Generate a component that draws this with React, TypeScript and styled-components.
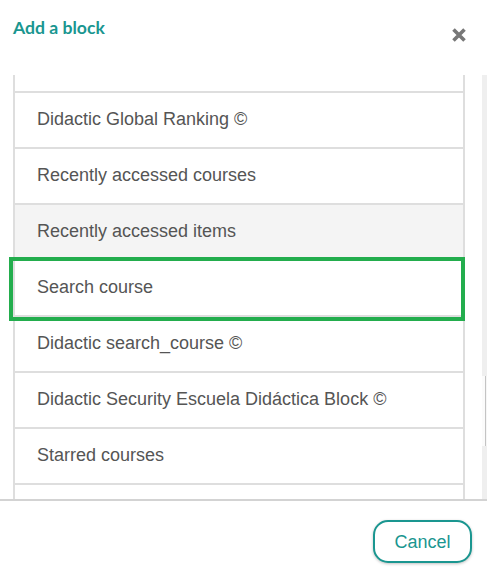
import React, { useLayoutEffect, useRef, useState } from "react";
import styled, { createGlobalStyle } from "styled-components";

const TEAL = "#1a9690";

const GlobalStyle = createGlobalStyle`
  html, body {
    margin: 0;
    padding: 0;
    background: #fff;
  }
  body {
    font-family: "Liberation Sans", Arial, sans-serif;
  }
  * { box-sizing: border-box; }
`;

const Modal = styled.div`
  width: 487px;
  height: 580px;
  display: flex;
  flex-direction: column;
  background: #fff;
  overflow: hidden;
`;

const Header = styled.header`
  height: 75px;
  flex: 0 0 auto;
  display: flex;
  justify-content: space-between;
  align-items: flex-start;
  padding: 18px 21px 0 13px;
`;

const Title = styled.h5`
  margin: 0;
  font-family: "Lato", "Open Sans", sans-serif;
  font-weight: 700;
  font-size: 17.6px;
  line-height: 20px;
  color: ${TEAL};
`;

const CloseButton = styled.button`
  margin: 10px 0 0;
  padding: 0;
  width: 14px;
  height: 14px;
  border: 0;
  background: none;
  display: block;
  cursor: pointer;
  svg { display: block; }
`;

const BodyRow = styled.div`
  flex: 0 0 424px;
  display: flex;
  min-height: 0;
`;

const Viewport = styled.div`
  flex: 1 1 auto;
  overflow-y: auto;
  overflow-x: hidden;
  padding: 0 17px 0 13px;
  scrollbar-width: none;
  &::-webkit-scrollbar { display: none; }
`;

const ScrollTrack = styled.div`
  flex: 0 0 5px;
  background: #efefef;
`;

const ScrollThumb = styled.div`
  width: 5px;
  background: linear-gradient(90deg, #fbfbfb 0 3px, #c4c4c4 3px 4px, #f6f6f6 4px);
`;

const List = styled.ul`
  list-style: none;
  margin: 0;
  padding: 0;
`;

const Item = styled.li<{ $hover?: boolean; $marked?: boolean }>`
  position: relative;
  z-index: ${(p) => (p.$marked ? 2 : "auto")};
  border: 2px solid #dedede;
  margin-top: -2px;
  padding: 15px 22px 17px;
  font-size: 18px;
  line-height: 22px;
  color: #555;
  background: ${(p) => (p.$hover ? "#f4f4f4" : "#fff")};
  white-space: nowrap;
  cursor: pointer;

  &:first-child { margin-top: 0; }

  ${(p) =>
    p.$marked
      ? `
    &::after {
      content: "";
      position: absolute;
      top: -4px;
      left: -6px;
      right: -2px;
      bottom: -6px;
      border: 4px solid #23ad4d;
      pointer-events: none;
    }
  `
      : ""}
`;

const Footer = styled.footer`
  flex: 1 1 auto;
  border-top: 2px solid #d3d3d3;
  display: flex;
  justify-content: flex-end;
  align-items: flex-start;
  padding: 19px 15px 0 0;
`;

const CancelButton = styled.button`
  width: 99px;
  height: 43px;
  border: 2px solid ${TEAL};
  border-radius: 15px;
  background: #fff;
  color: ${TEAL};
  font-family: "Liberation Sans", Arial, sans-serif;
  font-size: 18px;
  line-height: 20px;
  padding: 0;
  box-shadow: 0 1px 3px rgba(0, 0, 0, 0.25);
  cursor: pointer;
`;

const before = [
  "Activities",
  "Activity results",
  "Admin bookmarks",
  "Didactic Attendance ©",
  "Badges",
  "Blog menu",
  "Blog tags",
  "Calendar",
  "Comments",
  "Course completion status",
  "Didactic Course Progress ©",
  "Courses",
  "Didactic Dashboard ©",
  "Feedback",
  "Flickr",
  "Global search",
  "HTML",
  "Latest announcements",
  "Latest badges",
  "Learning plans",
  "Didactic Library ©",
  "Logged in user",
  "Main menu",
  "Mentees",
  "Didactic Messages ©",
  "Navigation",
  "Network servers",
  "Online users",
  "Didactic Points ©",
  "Private files",
  "Didactic Progress Bar ©",
  "Quiz results",
  "Random glossary entry",
];

const visible = [
  "Didactic Global Ranking ©",
  "Recently accessed courses",
  "Recently accessed items",
  "Search course",
  "Didactic search_course ©",
  "Didactic Security Escuela Didáctica Block ©",
  "Starred courses",
];

const after = [
  "Tags",
  "Text",
  "Timeline",
  "Upcoming events",
  "YouTube",
  "Didactic Zoom ©",
];

const blocks = [...before, ...visible, ...after];

export default function App() {
  const viewRef = useRef<HTMLDivElement>(null);
  const anchorRef = useRef<HTMLLIElement>(null);
  const [thumb, setThumb] = useState({ top: 0, height: 0 });

  useLayoutEffect(() => {
    const view = viewRef.current;
    const anchor = anchorRef.current;
    if (!view || !anchor) return;
    const update = () => {
      const { scrollTop, scrollHeight, clientHeight } = view;
      setThumb({
        top: (scrollTop / scrollHeight) * clientHeight,
        height: (clientHeight / scrollHeight) * clientHeight,
      });
    };
    view.scrollTop = anchor.offsetTop - view.offsetTop - 16;
    update();
    view.addEventListener("scroll", update);
    return () => view.removeEventListener("scroll", update);
  }, []);

  return (
    <>
      <GlobalStyle />
      <Modal role="dialog" aria-label="Add a block">
        <Header>
          <Title>Add a block</Title>
          <CloseButton aria-label="Close">
            <svg width="14" height="14" viewBox="0 0 14 14">
              <path
                d="M1.5 1.5 L12.5 12.5 M12.5 1.5 L1.5 12.5"
                stroke="#777"
                strokeWidth="3.6"
                fill="none"
              />
            </svg>
          </CloseButton>
        </Header>
        <BodyRow>
          <Viewport ref={viewRef}>
            <List>
              {blocks.map((name) => (
                <Item
                  key={name}
                  ref={name === "Didactic Global Ranking ©" ? anchorRef : undefined}
                  $hover={name === "Recently accessed items"}
                  $marked={name === "Search course"}
                >
                  {name}
                </Item>
              ))}
            </List>
          </Viewport>
          <ScrollTrack aria-hidden="true">
            <ScrollThumb style={{ marginTop: thumb.top, height: thumb.height }} />
          </ScrollTrack>
        </BodyRow>
        <Footer>
          <CancelButton>Cancel</CancelButton>
        </Footer>
      </Modal>
    </>
  );
}
